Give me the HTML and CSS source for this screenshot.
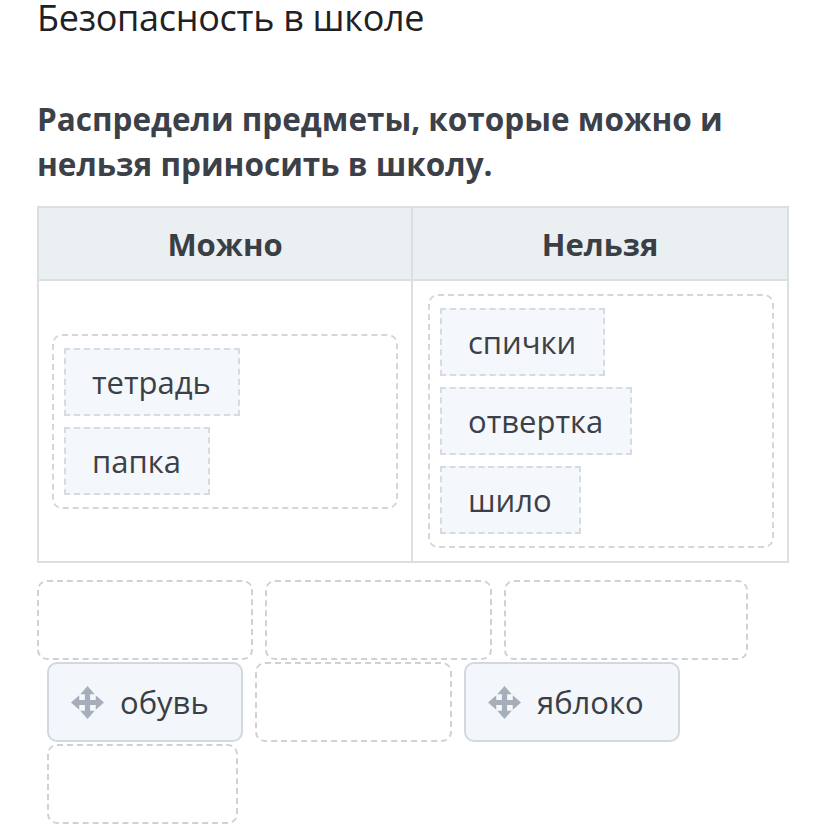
FILE: index.html
```html
<!DOCTYPE html>
<html lang="ru">

<head>
    <meta charset="UTF-8">
    <meta name="viewport" content="width=device-width, initial-scale=1.0">
    <title>Безопасность в школе</title>
    <link rel="stylesheet" href="styles.css">
</head>

<body>
    <div class="page">
        <h1 class="page_title">Безопасность в школе</h1>
        <p class="task_text">Распредели предметы, которые можно и нельзя приносить в школу.</p>

        <!-- таблица -->
        <div class="sort_table">
            <div class="sort_head">Можно</div>
            <div class="sort_head">Нельзя</div>
            <div class="sort_cell">
                <div class="drop_zone">
                    <div class="drop_item">тетрадь</div>
                    <div class="drop_item">папка</div>
                </div>
            </div>
            <div class="sort_cell">
                <div class="drop_zone">
                    <div class="drop_item">спички</div>
                    <div class="drop_item">отвертка</div>
                    <div class="drop_item">шило</div>
                </div>
            </div>
        </div>

        <!-- варианты -->
        <div class="bank">
            <div class="bank_row">
                <div class="slot w216"></div>
                <div class="slot w227"></div>
                <div class="slot w244"></div>
            </div>
            <div class="bank_row shifted">
                <div class="chip w196">
                    <svg class="chip_icon" viewBox="0 0 32 32">
                        <path d="M16 6v20M6 16h20" />
                        <path class="head" d="M16 0l7 8h-14zM16 32l7-8h-14zM0 16l8-7v14zM32 16l-8-7v14z" />
                    </svg>
                    <span>обувь</span>
                </div>
                <div class="slot w197"></div>
                <div class="chip w216">
                    <svg class="chip_icon" viewBox="0 0 32 32">
                        <path d="M16 6v20M6 16h20" />
                        <path class="head" d="M16 0l7 8h-14zM16 32l7-8h-14zM0 16l8-7v14zM32 16l-8-7v14z" />
                    </svg>
                    <span>яблоко</span>
                </div>
            </div>
            <div class="bank_row shifted">
                <div class="slot w191"></div>
            </div>
        </div>
    </div>
</body>

</html>
```

FILE: styles.css
```css
* {
    padding: 0;
    margin: 0;
    box-sizing: border-box;
}

body {
    background: #FFFFFF;
    font-family: "Open Sans", "Noto Sans", sans-serif;
    color: #3c4047;
}

.page {
    width: 752px;
    margin-left: 37px;
}

.page_title {
    font-size: 36px;
    line-height: 36px;
    font-weight: 400;
    color: #1f2125;
    letter-spacing: -0.3px;
}

.task_text {
    margin-top: 60px;
    font-size: 31.5px;
    line-height: 45px;
    font-weight: 700;
    color: #3c4048;
}

.sort_table {
    margin-top: 20px;
    display: grid;
    grid-template-columns: 1fr 1fr;
    grid-template-rows: 73px 280px;
    border: 2px solid #dcdfe2;
}

.sort_head {
    display: flex;
    justify-content: center;
    align-items: center;
    background: #eaeff2;
    border-bottom: 2px solid #dcdfe2;
    font-size: 31px;
    font-weight: 700;
    color: #3a3e45;
}

.sort_head:nth-of-type(1),
.sort_cell:nth-of-type(3) {
    border-right: 2px solid #dcdfe2;
}

.sort_cell {
    display: flex;
    align-items: center;
    padding: 0 13px;
}

.sort_cell:nth-of-type(4) {
    padding-left: 15px;
}

.drop_zone {
    width: 100%;
    display: flex;
    flex-direction: column;
    align-items: flex-start;
    gap: 11px;
    padding: 12px 10px;
    border: 2px dashed #d3d7db;
    border-radius: 10px;
}

.drop_item {
    height: 68px;
    display: flex;
    align-items: center;
    padding: 0 27px 0 26px;
    background: #f4f7fb;
    border: 2px dashed #d6dbe0;
    font-size: 31px;
    color: #3c4047;
}

.bank {
    margin-top: 17px;
    display: flex;
    flex-direction: column;
    gap: 2px;
}

.bank_row {
    display: flex;
    gap: 12px;
}

.bank_row.shifted {
    padding-left: 10px;
}

.slot,
.chip {
    height: 80px;
    border-radius: 10px;
}

.slot {
    border: 2px dashed #cdd2d6;
}

.chip {
    display: flex;
    align-items: center;
    padding-left: 22px;
    background: #f3f6fa;
    border: 2px solid #d3d8de;
    font-size: 31px;
    color: #3a3e45;
}

.chip>span {
    margin-left: 16px;
}

.chip_icon {
    width: 33px;
    height: 33px;
    fill: none;
    stroke: #a6afb9;
    stroke-width: 5;
}

.chip_icon .head {
    fill: #a6afb9;
    stroke: none;
}

.w191 { width: 191px; }
.w196 { width: 196px; }
.w197 { width: 197px; }
.w216 { width: 216px; }
.w227 { width: 227px; }
.w244 { width: 244px; }
```
